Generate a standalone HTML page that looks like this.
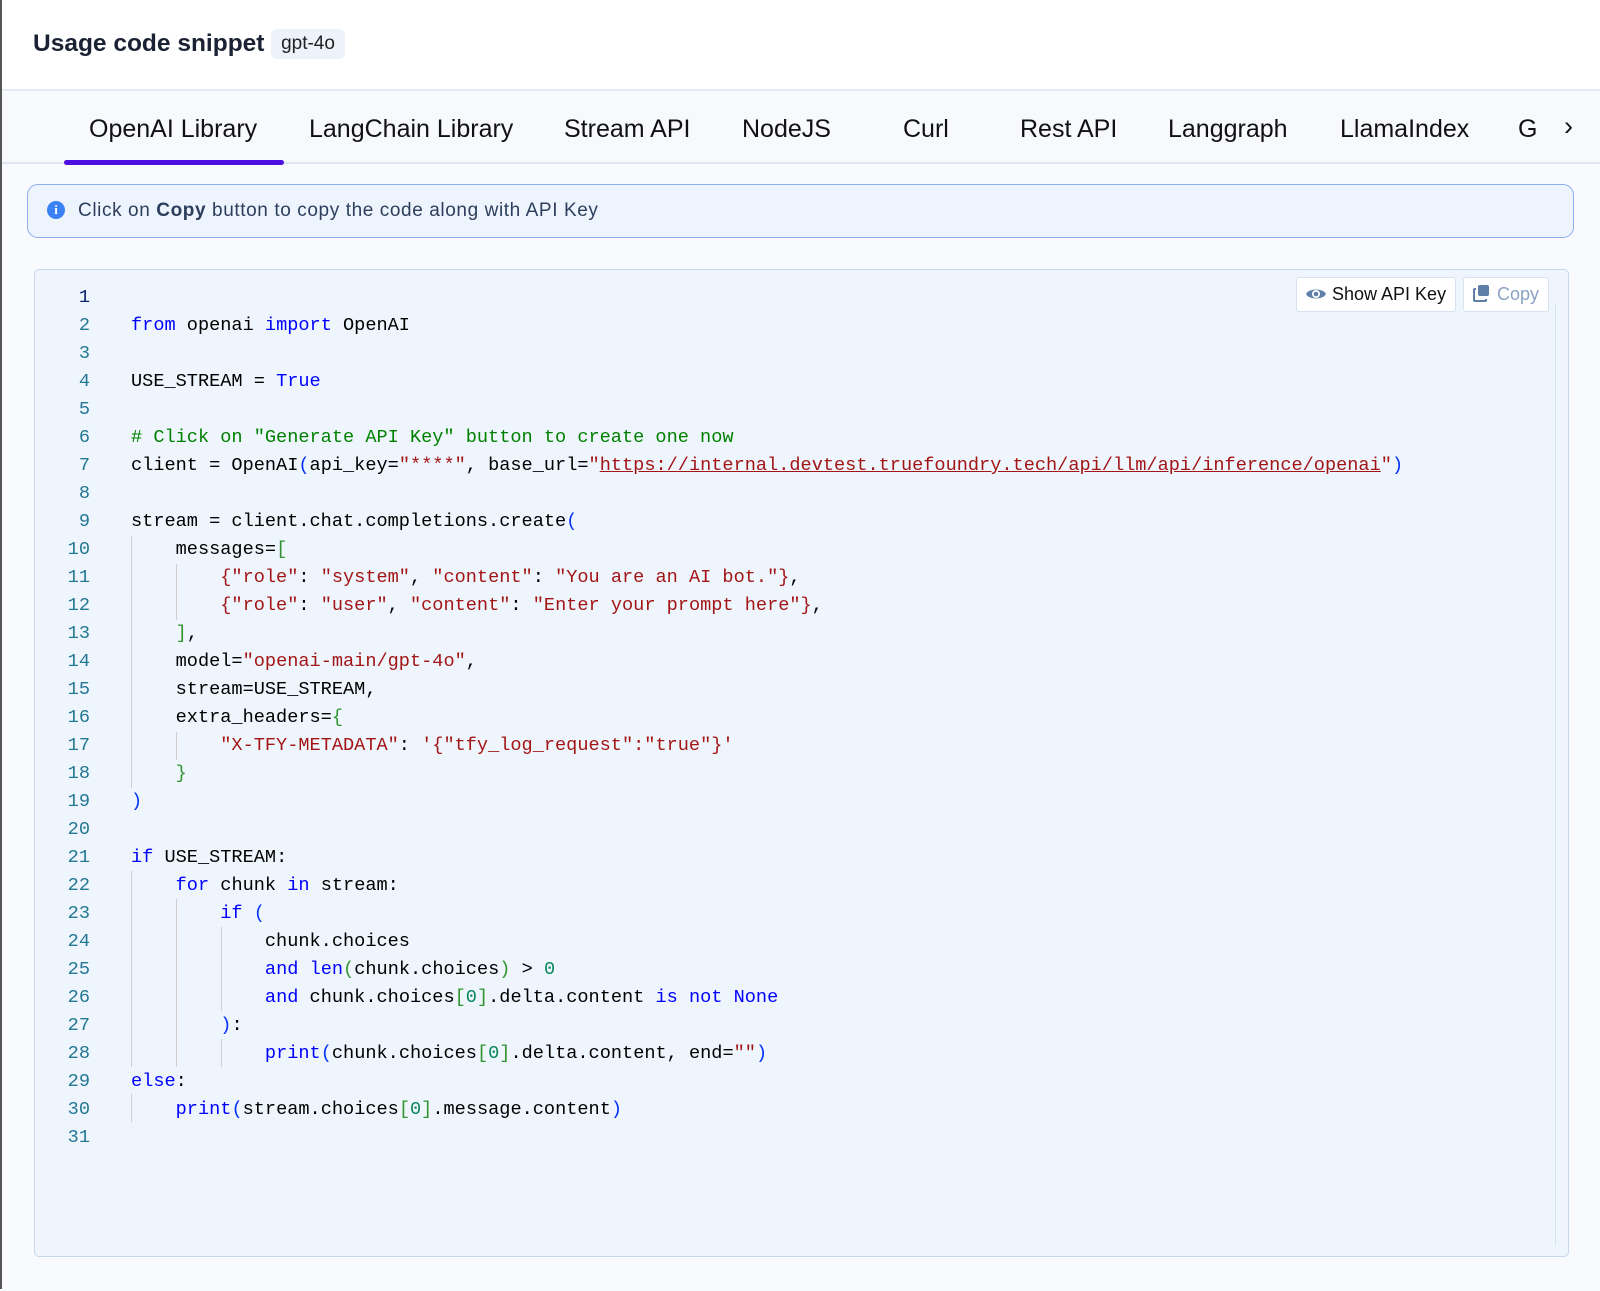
<!DOCTYPE html>
<html><head><meta charset="utf-8"><style>
*{margin:0;padding:0;box-sizing:border-box}
body{width:1600px;height:1289px;background:#f9fafe;font-family:"Liberation Sans",sans-serif;position:relative;overflow:hidden}
.edge{position:absolute;left:0;top:0;width:2px;height:1289px;background:#555}
.hdr{position:absolute;left:2px;top:0;width:1598px;height:91px;background:#fff;border-bottom:2px solid #e3eaf5}
.title{position:absolute;left:33px;top:30px;font-size:24.5px;font-weight:bold;color:#1a2233}
.badge{position:absolute;left:271px;top:29px;width:74px;height:30px;background:#eef3fb;border-radius:6px;font-size:19px;color:#222;text-align:center;line-height:30px}
.tabs{position:absolute;left:2px;top:92px;width:1598px;height:72px;background:#f7f9fd;border-bottom:2px solid #dde6f3}
.tab{position:absolute;top:23px;font-size:25px;color:#111;white-space:nowrap}
.ul{position:absolute;left:64px;top:160px;width:220px;height:5px;background:#4d0ee0;border-radius:3px}
.info{position:absolute;left:27px;top:184px;width:1547px;height:54px;background:#eef4fd;border:1px solid #8eaef0;border-radius:11px}
.info .i{position:absolute;left:19px;top:16px;width:18px;height:18px;border-radius:50%;background:#3b82f6;color:#fff;font-size:13px;font-weight:bold;text-align:center;line-height:18px;font-family:"Liberation Serif",serif}
.info .t{position:absolute;left:50px;top:15px;font-size:19px;color:#2c3e5c;letter-spacing:.6px}
.code{position:absolute;left:34px;top:269px;width:1535px;height:988px;background:#eef5fd;border:1px solid #c6d7ef;border-radius:5px}
.sb{position:absolute;left:1555px;top:305px;width:1px;height:940px;background:#d6e0ee}
.btn{position:absolute;top:277px;height:35px;background:#fff;border:1px solid #d9e3f0;border-radius:3px;font-size:18px;line-height:33px;color:#111}
.ln{position:absolute;left:60px;width:30px;text-align:right;font-family:"Liberation Mono",monospace;font-size:18.6px;color:#237893;height:28px;line-height:28px}
.cl{position:absolute;left:131px;font-family:"Liberation Mono",monospace;font-size:18.6px;color:#000;white-space:pre;height:28px;line-height:28px}
.k{color:#0000ff}.s{color:#a31515}.c{color:#008000}.g{color:#098658}.b{color:#0431fa}.gr{color:#319331}
.u{text-decoration:underline}
.gd{position:absolute;width:1px;background:#d3cccc}
#cw{position:absolute;left:0;top:2px;width:1600px;height:1289px}
</style></head><body>
<div class="edge"></div>
<div class="hdr"></div>
<div class="title">Usage code snippet</div>
<div class="badge">gpt-4o</div>
<div class="tabs">
<div class="tab" style="left:87px">OpenAI Library</div>
<div class="tab" style="left:307px">LangChain Library</div>
<div class="tab" style="left:562px">Stream API</div>
<div class="tab" style="left:740px">NodeJS</div>
<div class="tab" style="left:901px">Curl</div>
<div class="tab" style="left:1018px">Rest API</div>
<div class="tab" style="left:1166px">Langgraph</div>
<div class="tab" style="left:1338px">LlamaIndex</div>
<div class="tab" style="left:1516px;width:22px;overflow:hidden">G</div>
<div class="tab" style="left:1562px;top:19px;font-size:27px">›</div>
</div>
<div class="ul"></div>
<div class="info"><div class="i">i</div><div class="t">Click on <b>Copy</b> button to copy the code along with API Key</div></div>
<div class="code"></div>
<div class="sb"></div>
<div class="btn" style="left:1296px;width:160px;padding-left:8px"><svg width="22" height="16" viewBox="0 0 22 16" style="vertical-align:-2px"><path d="M1 8C4 2 18 2 21 8C18 14 4 14 1 8Z" fill="#5f7ea8"/><circle cx="11" cy="8" r="4" fill="#fff"/><circle cx="11" cy="8" r="2.3" fill="#5f7ea8"/></svg> Show API Key</div>
<div class="btn" style="left:1463px;width:86px;padding-left:8px;color:#8aa2c4"><svg width="20" height="18" viewBox="0 0 20 18" style="vertical-align:-2px"><rect x="6" y="1" width="11" height="11" rx="2" fill="#5f7ea8"/><path d="M4 5H3a1 1 0 0 0-1 1v10a1 1 0 0 0 1 1h10a1 1 0 0 0 1-1v-1" stroke="#5f7ea8" stroke-width="2" fill="none"/></svg> Copy</div>
<div id="cw">
<div class="gd" style="left:131px;top:534px;height:252px"></div>
<div class="gd" style="left:131px;top:869px;height:196px"></div>
<div class="gd" style="left:131px;top:1092px;height:28px"></div>
<div class="gd" style="left:176px;top:562px;height:56px"></div>
<div class="gd" style="left:176px;top:730px;height:28px"></div>
<div class="gd" style="left:176px;top:897px;height:168px"></div>
<div class="gd" style="left:221px;top:925px;height:84px"></div>
<div class="gd" style="left:221px;top:1037px;height:28px"></div>

<div class="ln" style="top:282px;color:#0b216f">1</div>
<div class="ln" style="top:310px">2</div><div class="cl" style="top:310px"><span class="k">from</span> openai <span class="k">import</span> OpenAI</div>
<div class="ln" style="top:338px">3</div>
<div class="ln" style="top:366px">4</div><div class="cl" style="top:366px">USE_STREAM = <span class="k">True</span></div>
<div class="ln" style="top:394px">5</div>
<div class="ln" style="top:422px">6</div><div class="cl c" style="top:422px"># Click on "Generate API Key" button to create one now</div>
<div class="ln" style="top:450px">7</div><div class="cl" style="top:450px">client = OpenAI<span class="b">(</span>api_key=<span class="s">"****"</span>, base_url=<span class="s">"<span class="u">https://internal.devtest.truefoundry.tech/api/llm/api/inference/openai</span>"</span><span class="b">)</span></div>
<div class="ln" style="top:478px">8</div>
<div class="ln" style="top:506px">9</div><div class="cl" style="top:506px">stream = client.chat.completions.create<span class="b">(</span></div>
<div class="ln" style="top:534px">10</div><div class="cl" style="top:534px">    messages=<span class="gr">[</span></div>
<div class="ln" style="top:562px">11</div><div class="cl" style="top:562px">        <span class="s">{"role"</span>: <span class="s">"system"</span>, <span class="s">"content"</span>: <span class="s">"You are an AI bot."}</span>,</div>
<div class="ln" style="top:590px">12</div><div class="cl" style="top:590px">        <span class="s">{"role"</span>: <span class="s">"user"</span>, <span class="s">"content"</span>: <span class="s">"Enter your prompt here"}</span>,</div>
<div class="ln" style="top:618px">13</div><div class="cl" style="top:618px">    <span class="gr">]</span>,</div>
<div class="ln" style="top:646px">14</div><div class="cl" style="top:646px">    model=<span class="s">"openai-main/gpt-4o"</span>,</div>
<div class="ln" style="top:674px">15</div><div class="cl" style="top:674px">    stream=USE_STREAM,</div>
<div class="ln" style="top:702px">16</div><div class="cl" style="top:702px">    extra_headers=<span class="gr">{</span></div>
<div class="ln" style="top:730px">17</div><div class="cl" style="top:730px">        <span class="s">"X-TFY-METADATA"</span>: <span class="s">'{"tfy_log_request":"true"}'</span></div>
<div class="ln" style="top:758px">18</div><div class="cl" style="top:758px">    <span class="gr">}</span></div>
<div class="ln" style="top:786px">19</div><div class="cl" style="top:786px"><span class="b">)</span></div>
<div class="ln" style="top:814px">20</div>
<div class="ln" style="top:842px">21</div><div class="cl" style="top:842px"><span class="k">if</span> USE_STREAM:</div>
<div class="ln" style="top:870px">22</div><div class="cl" style="top:870px">    <span class="k">for</span> chunk <span class="k">in</span> stream:</div>
<div class="ln" style="top:898px">23</div><div class="cl" style="top:898px">        <span class="k">if</span> <span class="b">(</span></div>
<div class="ln" style="top:926px">24</div><div class="cl" style="top:926px">            chunk.choices</div>
<div class="ln" style="top:954px">25</div><div class="cl" style="top:954px">            <span class="k">and</span> <span class="k">len</span><span class="gr">(</span>chunk.choices<span class="gr">)</span> &gt; <span class="g">0</span></div>
<div class="ln" style="top:982px">26</div><div class="cl" style="top:982px">            <span class="k">and</span> chunk.choices<span class="gr">[</span><span class="g">0</span><span class="gr">]</span>.delta.content <span class="k">is not None</span></div>
<div class="ln" style="top:1010px">27</div><div class="cl" style="top:1010px">        <span class="b">)</span>:</div>
<div class="ln" style="top:1038px">28</div><div class="cl" style="top:1038px">            <span class="k">print</span><span class="b">(</span>chunk.choices<span class="gr">[</span><span class="g">0</span><span class="gr">]</span>.delta.content, end=<span class="s">""</span><span class="b">)</span></div>
<div class="ln" style="top:1066px">29</div><div class="cl" style="top:1066px"><span class="k">else</span>:</div>
<div class="ln" style="top:1094px">30</div><div class="cl" style="top:1094px">    <span class="k">print</span><span class="b">(</span>stream.choices<span class="gr">[</span><span class="g">0</span><span class="gr">]</span>.message.content<span class="b">)</span></div>
<div class="ln" style="top:1122px">31</div>
</div>
</body></html>
